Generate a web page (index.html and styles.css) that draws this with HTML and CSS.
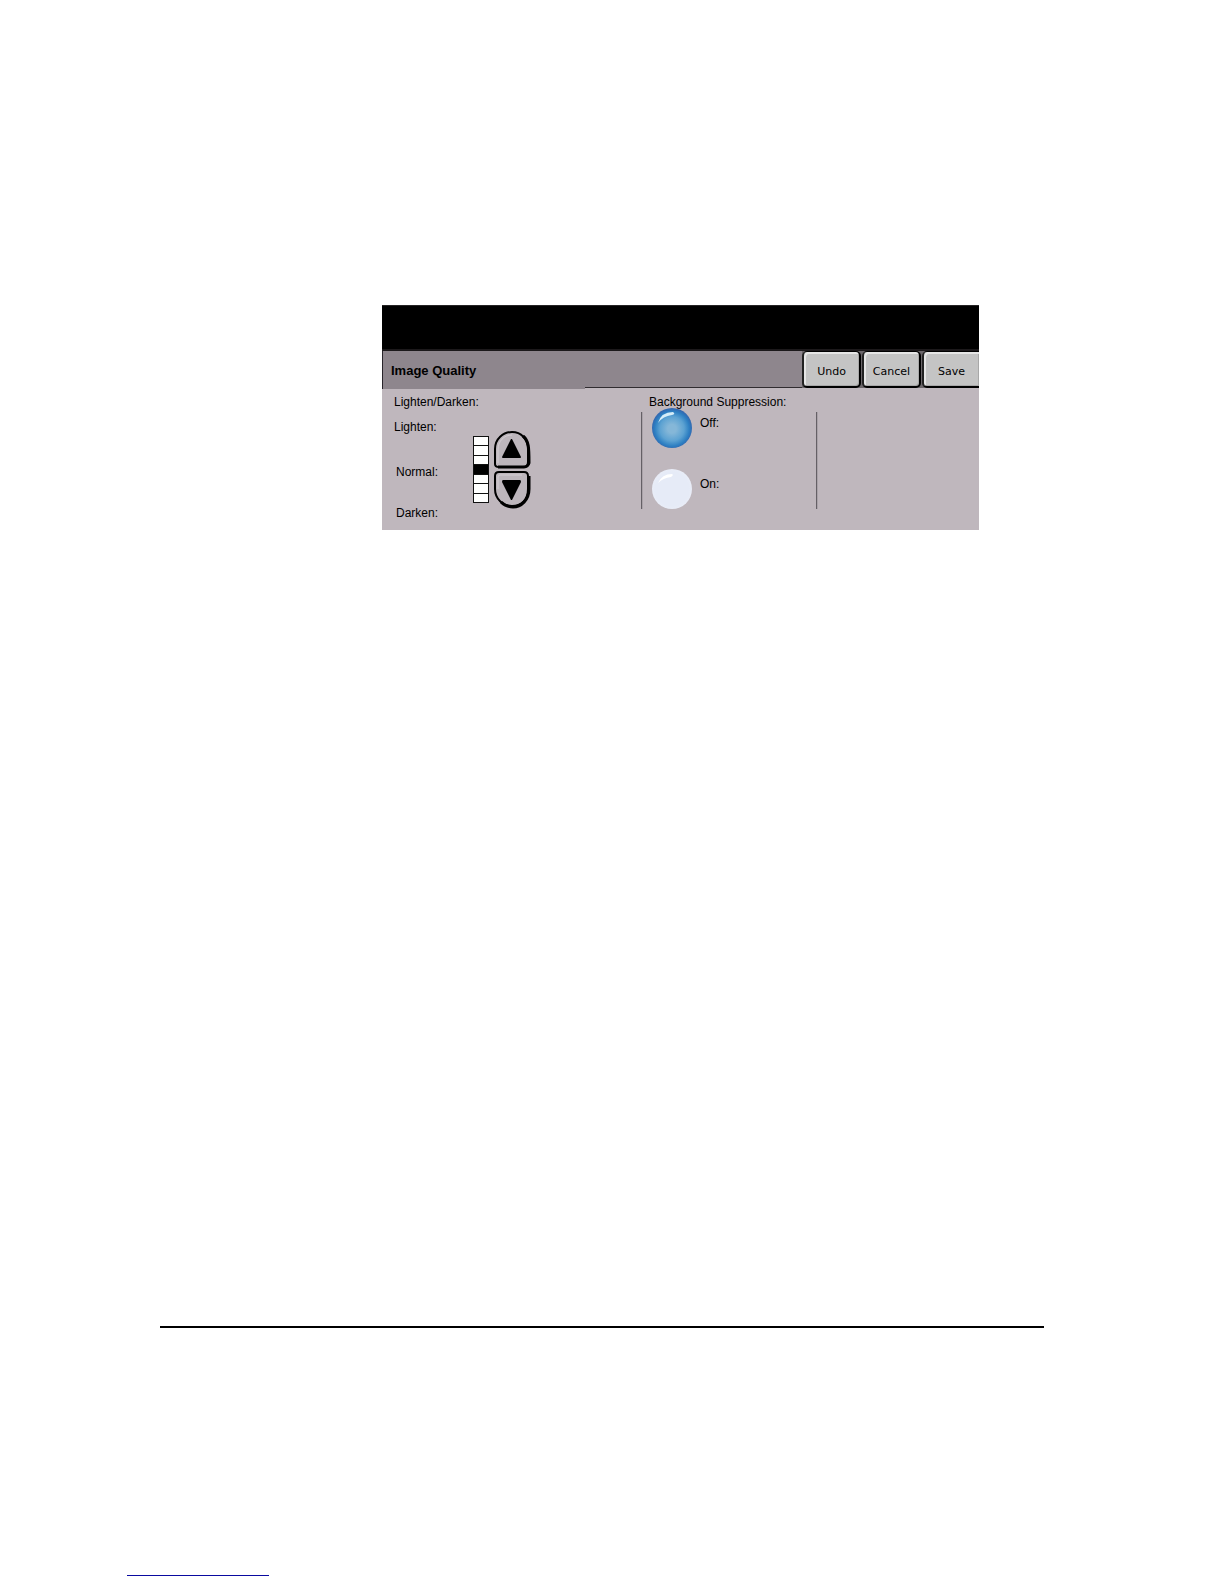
FILE: index.html
```
<!DOCTYPE html>
<html lang="en">
<head>
<meta charset="utf-8">
<title>Image Quality</title>
<link rel="stylesheet" href="styles.css">
</head>
<body>
<main class="sheet">
  <form class="panel">
    <div class="status"></div>
    <header class="toolbar">
      <div class="heading"><h1>Image Quality</h1></div>
      <div class="rule-side"></div>
      <div class="actions">
        <button type="button">Undo</button>
        <button type="button">Cancel</button>
        <button type="button" class="last">Save</button>
      </div>
    </header>
    <div class="options">
      <section class="level">
        <h2>Lighten/Darken:</h2>
        <div class="level-row">
          <div class="marks"><span>Lighten:</span><span class="inset">Normal:</span><span class="inset">Darken:</span></div>
          <div class="scale">
            <i></i><i></i><i></i><i class="current"></i><i></i><i></i><i></i>
          </div>
          <div class="steppers">
            <button type="button" aria-label="Lighten">
              <svg width="38" height="39" viewBox="0 0 38 39">
                <path d="M2 34V19C2 9 10 2 19 2S35 9 35 19V32Q35 37 30 37H6Q2 37 2 34Z" fill="#bdb6bc" stroke="#000" stroke-width="2"/>
                <path d="M30 6C36 11 36 18 36 33Q35 37 31 37H5" fill="none" stroke="#000" stroke-width="3"/>
                <path d="M5 33V20C5 11 11 5 19 5" fill="none" stroke="#d4ced3" stroke-width="1"/>
                <path d="M18 9L9 27Q9 28 10 28H27Q28 28 28 27L19 9Z"/>
              </svg>
            </button>
            <button type="button" aria-label="Darken">
              <svg width="38" height="39" viewBox="0 0 38 39">
                <path d="M2 6Q2 2 6 2H31Q35 2 35 6V19C35 30 28 36 19 36S2 29 2 19Z" fill="#bdb6bc" stroke="#000" stroke-width="2"/>
                <path d="M36 6V19C36 30 28 37 20 37Q13 37 8 32" fill="none" stroke="#000" stroke-width="3"/>
                <path d="M5 19V7Q5 5 7 5H29" fill="none" stroke="#d4ced3" stroke-width="1"/>
                <path d="M18 30L9 12Q9 10 10 10H27Q28 10 28 12L19 30Z"/>
              </svg>
            </button>
          </div>
        </div>
      </section>
      <div class="divider"></div>
      <section class="suppression">
        <h2>Background Suppression:</h2>
        <div class="choice"><input type="radio" name="suppression" id="off" checked><label for="off">Off:</label></div>
        <div class="choice"><input type="radio" name="suppression" id="on"><label for="on">On:</label></div>
      </section>
      <div class="divider"></div>
    </div>
  </form>
  <footer class="footer">
    <hr>
    <a class="footer-link" href="#" aria-label="Home"></a>
  </footer>
</main>
</body>
</html>
```
FILE: styles.css
```
* { box-sizing: border-box; }
body {
  margin: 0;
  background: #fff;
  color: #000;
  font-family: "Liberation Sans", Arial, sans-serif;
  font-size: 12px;
  line-height: 16px;
}
h1, h2 { margin: 0; }
.sheet { padding: 305px 0 8px; }
.panel {
  margin: 0 245px 0 382px;
  background: #bfb7bd;
  overflow: hidden;
}
.status {
  height: 46px;
  background: #000;
  border-top: 1px solid #252324;
  border-bottom: 2px solid #1c191b;
}
.toolbar {
  display: flex;
  align-items: flex-start;
  height: 37px;
}
.heading {
  flex: 0 0 203px;
  height: 38px;
  padding: 12px 0 0 8px;
  border-left: 1px solid #28242a;
  background: #8e868d;
}
h1 { font-size: 13px; line-height: 16px; }
.rule-side {
  flex: 1;
  height: 37px;
  border-bottom: 1px solid #302c30;
  background: #8e868d;
}
.actions {
  display: flex;
  gap: 1px;
  background: #6b666a;
}
.actions button {
  width: 59px;
  height: 37px;
  padding: 5px 0 0;
  border: 2px solid #000;
  border-top-width: 1px;
  border-left-color: #222;
  border-radius: 5px;
  background: #c4c4c4;
  box-shadow: inset 2px 2px 0 #e6e6e6, inset -1px -1px 0 #a8a8a8;
  color: #000;
  font: 11px/16px "DejaVu Sans", sans-serif;
}
.actions .last {
  width: 57px;
  border-right: 0;
  border-radius: 5px 0 0 5px;
}
.options { display: flex; height: 142px; }
h2 {
  padding-top: 7px;
  font-size: 12px;
  font-weight: 400;
  line-height: 14px;
  white-space: nowrap;
}
.level { flex: 0 0 259px; padding-left: 12px; }
.level-row { display: flex; padding-top: 10px; }
.marks {
  display: grid;
  grid-template-rows: 45px 41px 16px;
  width: 79px;
}
.inset { padding-left: 2px; }
.scale {
  display: grid;
  grid-template-rows: repeat(7, 1fr);
  gap: 1px;
  width: 16px;
  height: 67px;
  margin-top: 17px;
  padding: 1px;
  background: #111;
}
.scale i { background: #fff; }
.scale .current { background: #000; }
.steppers {
  display: flex;
  flex-direction: column;
  gap: 1px;
  margin: 11px 0 0 4px;
}
.steppers button {
  width: 38px;
  height: 39px;
  padding: 0;
  border: 0;
  background: none;
}
.steppers svg { display: block; }
.divider {
  width: 2px;
  height: 97px;
  margin-top: 24px;
  border-left: 1px solid #656066;
  border-right: 1px solid #aaa3a9;
}
.suppression { flex: 0 0 173px; padding-left: 6px; }
.suppression h2 { height: 20px; }
.choice {
  display: flex;
  align-items: flex-start;
  gap: 8px;
  height: 61px;
  padding-left: 3px;
}
.choice label { padding-top: 7px; }
.choice input {
  appearance: none;
  width: 40px;
  height: 40px;
  margin: 0;
  border-radius: 50%;
  background:
    url("data:image/svg+xml,%3Csvg xmlns='http://www.w3.org/2000/svg' width='40' height='40'%3E%3Cpath d='M6 14Q10 5 20 5Q22 6 19 8Q11 9 6 14Z' fill='%23fff'/%3E%3C/svg%3E"),
    radial-gradient(circle, #e6ebf7 60%, #f0f2f9 95%);
}
.choice input:checked {
  background:
    url("data:image/svg+xml,%3Csvg xmlns='http://www.w3.org/2000/svg' width='40' height='40'%3E%3Cpath d='M6 15Q9 4 21 4Q24 6 20 7Q11 8 6 15Z' fill='%23d5edf8'/%3E%3C/svg%3E"),
    radial-gradient(circle at 50% 52%, #85b7d8 15%, #5ca2d2 42%, #2d7fc2 60%, #3268b0 70%);
}
.footer { padding: 796px 180px 0 160px; }
.footer hr { margin: 0; border: 0; border-top: 2px solid #000; }
.footer-link {
  display: block;
  width: 142px;
  height: 248px;
  margin-left: -33px;
  border-bottom: 1px solid #0a0aa0;
}
```
